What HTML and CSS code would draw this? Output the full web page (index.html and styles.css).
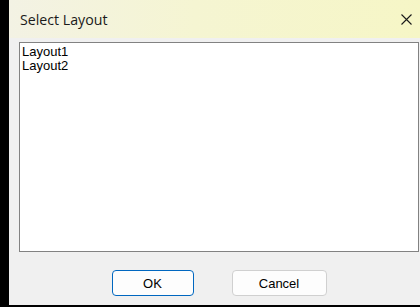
FILE: index.html
```html
<!DOCTYPE html>
<html lang="en">

<head>
    <meta charset="UTF-8">
    <title>Select Layout</title>
    <link rel="stylesheet" href="styles.css">
</head>

<body>
    <div class="dialog">
        <!-- Title bar -->
        <div class="title-bar">
            <span class="title">Select Layout</span>
            <button class="close-btn" aria-label="Close">
                <svg width="11" height="11" viewBox="0 0 11 11">
                    <path d="M0.5 0.5 L10.5 10.5 M10.5 0.5 L0.5 10.5" stroke="#1a1a1a" stroke-width="1.1" fill="none" />
                </svg>
            </button>
        </div>

        <div class="content">
            <ul class="layout-list">
                <li>Layout1</li>
                <li>Layout2</li>
            </ul>

            <div class="button-row">
                <button class="dlg-btn default">OK</button>
                <button class="dlg-btn">Cancel</button>
            </div>
        </div>
    </div>
</body>

</html>
```

FILE: styles.css
```css
body {
    margin: 0;
    width: 420px;
    height: 307px;
    background: #000;
    overflow: hidden;
}

.dialog {
    margin-left: 9px;
    height: 305px;
    background: #f0f0f0;
    display: flex;
    flex-direction: column;
}

.title-bar {
    height: 38px;
    display: flex;
    align-items: center;
    justify-content: space-between;
    padding-left: 11px;
    padding-right: 8px;
    background: linear-gradient(to right, #f3f2e4, #f5f5d2 45%, #f6f6c6);
}

.title {
    font-family: "Open Sans", "Noto Sans", sans-serif;
    font-size: 14.2px;
    color: #1a1a1a;
    margin-top: 1px;
}

.close-btn {
    border: none;
    background: none;
    padding: 0;
    width: 11px;
    height: 11px;
    display: flex;
    margin-top: 0;
}

.content {
    flex: 1;
    display: flex;
    flex-direction: column;
    padding: 4px 1px 0 10px;
}

.layout-list {
    list-style: none;
    margin: 0;
    padding: 2px 2px;
    height: 204px;
    background: #fff;
    border: 1px solid #828282;
    font-family: "Liberation Sans", Arial, sans-serif;
    font-size: 13px;
    line-height: 14px;
    color: #000;
}

.button-row {
    display: flex;
    justify-content: center;
    gap: 38px;
    margin-top: 18px;
}

.dlg-btn {
    height: 26px;
    width: 95px;
    border: 1px solid #d0d0d0;
    border-radius: 4px;
    background: #fdfdfd;
    font-family: "Liberation Sans", Arial, sans-serif;
    font-size: 13px;
    color: #000;
    padding: 0;
}

.dlg-btn.default {
    width: 82px;
    border-color: #0067c0;
}
```
